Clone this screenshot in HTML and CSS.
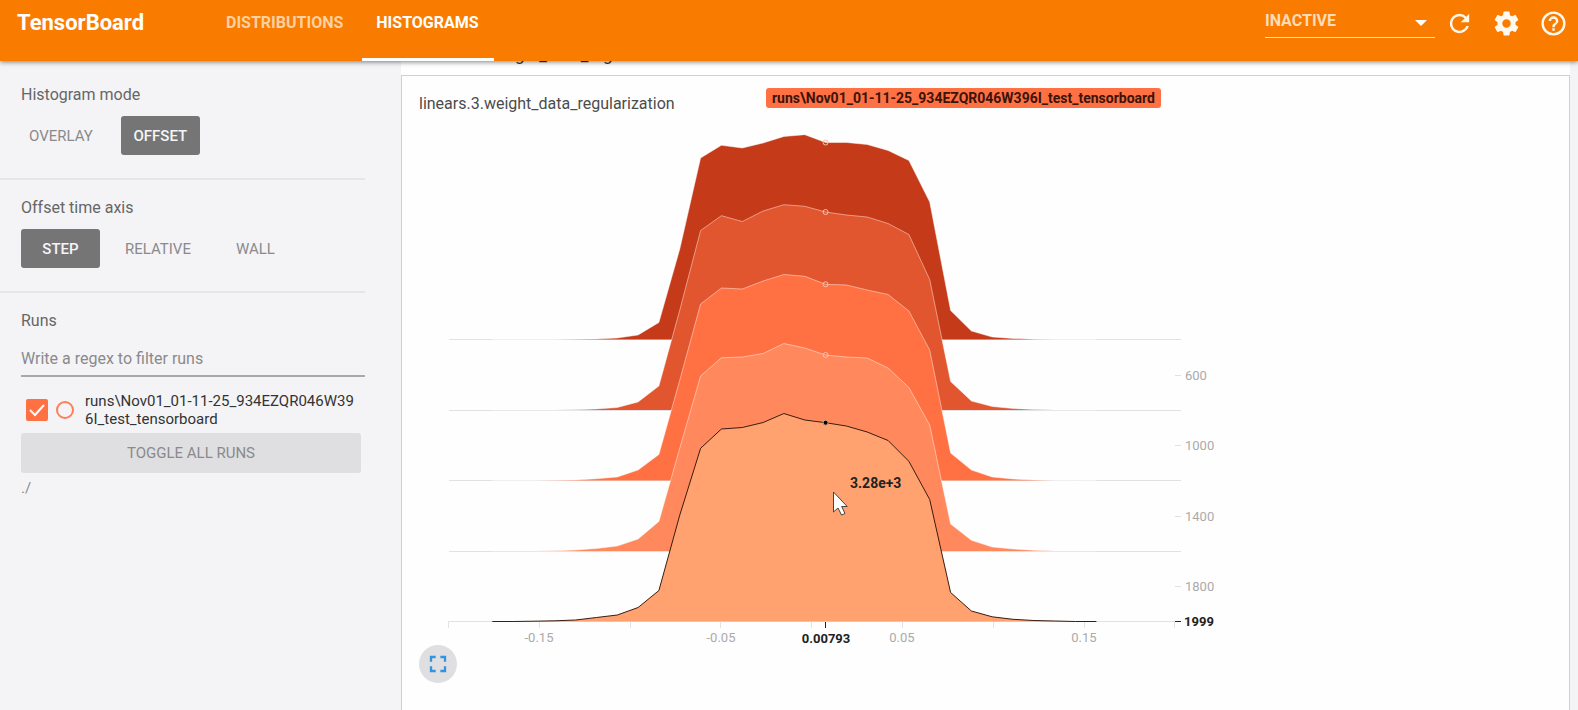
FILE: index.html
```html
<!DOCTYPE html>
<html lang="en">
<head>
<meta charset="utf-8">
<title>TensorBoard</title>
<link rel="stylesheet" href="styles.css">
</head>
<body>
<header class="toolbar">
  <h1 class="brand">TensorBoard</h1>
  <nav class="tabs">
    <a class="tab" href="#distributions">DISTRIBUTIONS</a>
    <a class="tab tab-active" href="#histograms" aria-current="page">HISTOGRAMS</a>
  </nav>
  <div class="reload">
    <select class="reload-select" aria-label="Inactive dashboards"><option>INACTIVE</option></select>
    <svg class="caret" viewBox="0 0 12 6" aria-hidden="true"><path d="M0 0h12L6 6z"/></svg>
  </div>
  <button class="icon-button" aria-label="Reload"><svg viewBox="0 0 24 24"><path d="M17.65 6.35A7.96 7.96 0 0 0 12 4a8 8 0 1 0 7.73 10h-2.08A6 6 0 1 1 12 6c1.66 0 3.14.69 4.22 1.78L13 11h7V4z"/></svg></button>
  <button class="icon-button" aria-label="Settings"><svg viewBox="0 0 24 24"><path d="M19.43 12.98c.04-.32.07-.64.07-.98s-.03-.66-.07-.98l2.11-1.65c.19-.15.24-.42.12-.64l-2-3.46c-.12-.22-.39-.3-.61-.22l-2.49 1c-.52-.4-1.08-.73-1.69-.98l-.38-2.65A.49.49 0 0 0 14 2h-4c-.25 0-.46.18-.49.42l-.38 2.65c-.61.25-1.17.59-1.69.98l-2.49-1c-.23-.09-.49 0-.61.22l-2 3.46c-.13.22-.07.49.12.64l2.11 1.65c-.04.32-.07.65-.07.98s.03.66.07.98l-2.11 1.65c-.19.15-.24.42-.12.64l2 3.46c.12.22.39.3.61.22l2.49-1c.52.4 1.08.73 1.69.98l.38 2.65c.03.24.24.42.49.42h4c.25 0 .46-.18.49-.42l.38-2.65c.61-.25 1.17-.59 1.69-.98l2.49 1c.23.09.49 0 .61-.22l2-3.46c.12-.22.07-.49-.12-.64zM12 15.5a3.5 3.5 0 1 1 0-7 3.5 3.5 0 0 1 0 7z"/></svg></button>
  <button class="icon-button" aria-label="Help"><svg viewBox="0 0 24 24"><path d="M11 18h2v-2h-2zm1-16a10 10 0 1 0 0 20 10 10 0 0 0 0-20zm0 18a8 8 0 1 1 0-16 8 8 0 0 1 0 16zm0-14a4 4 0 0 0-4 4h2a2 2 0 1 1 4 0c0 2-3 1.75-3 5h2c0-2.25 3-2.5 3-5a4 4 0 0 0-4-4z"/></svg></button>
</header>
<div class="dashboard">
  <aside class="sidebar">
    <section class="group">
      <h2 class="group-title">Histogram mode</h2>
      <div class="options">
        <button class="option option-first">OVERLAY</button>
        <button class="option option-on">OFFSET</button>
      </div>
    </section>
    <section class="group">
      <h2 class="group-title">Offset time axis</h2>
      <div class="options">
        <button class="option option-on">STEP</button>
        <button class="option">RELATIVE</button>
        <button class="option">WALL</button>
      </div>
    </section>
    <section class="group group-runs">
      <h2 class="group-title">Runs</h2>
      <input class="regex" type="text" placeholder="Write a regex to filter runs" aria-label="Write a regex to filter runs">
      <div class="run">
        <span class="check">
          <input class="check-box" type="checkbox" id="run-1" checked>
          <svg class="check-mark" viewBox="0 0 22 22" aria-hidden="true"><path d="M4 11l5 5 9-10"/></svg>
        </span>
        <span class="run-color"></span>
        <label class="run-name" for="run-1">runs\Nov01_01-11-25_934EZQR046W396I_test_tensorboard</label>
      </div>
      <button class="toggle-all">TOGGLE ALL RUNS</button>
      <p class="logdir">./</p>
    </section>
  </aside>
  <main class="content">
    <div class="category"><span>linears.3.weight_data_regularization</span></div>
    <article class="card">
      <div class="card-head">
        <h3 class="card-title">linears.3.weight_data_regularization</h3>
        <span class="chip">runs\Nov01_01-11-25_934EZQR046W396I_test_tensorboard</span>
      </div>
      <svg class="chart" viewBox="419 120 800 530" role="img" aria-label="Histogram by step">
        <g class="baselines">
          <path d="M449 339.5H1181M449 410.5H1181M449 480.5H1181M449 551.5H1181M449 621.5H1175"/>
          <path d="M448.5 621v7M539.5 621v7M630.5 621v7M720.5 621v7M811.5 621v7M902.5 621v7M993.5 621v7M1084.5 621v7M1174.5 621v7"/>
          <path d="M1175 375.5h6M1175 445.5h6M1175 516.5h6M1175 586.5h6"/>
        </g>
        <g class="layers" id="layers"></g>
        <path class="hover-tick" d="M825.5 622v6M1175 621.5h6"/>
        <g class="axis">
          <text x="539" y="642">-0.15</text><text x="721" y="642">-0.05</text><text x="902" y="642">0.05</text><text x="1084" y="642">0.15</text>
        </g>
        <g class="axis axis-y">
          <text x="1185" y="380">600</text><text x="1185" y="450">1000</text><text x="1185" y="521">1400</text><text x="1185" y="591">1800</text>
        </g>
        <text class="hover-label hover-middle" x="826" y="643">0.00793</text>
        <text class="hover-label" x="1184" y="626">1999</text>
        <text class="hover-label hover-value" x="850" y="488">3.28e+3</text>
        <path class="pointer" d="M833.5 492v20l4.500-4 3.500 7 3.500-1.500-3.300-7h5.500z"/>
      </svg>
      <button class="expand" aria-label="Expand chart"><svg viewBox="0 0 24 24"><path d="M5 5h5v2H7v3H5zm9 0h5v5h-2V7h-3zM5 14h2v3h3v2H5zm12 0h2v5h-5v-2h3z"/></svg></button>
    </article>
  </main>
</div>
<script src="chart.js"></script>
</body>
</html>
```
FILE: styles.css
```css
* { box-sizing: border-box; }
body {
  margin: 0;
  height: 100vh;
  display: flex;
  flex-direction: column;
  overflow: hidden;
  background: #f4f4f6;
  color: #666;
  font-family: Roboto, "Liberation Sans", sans-serif;
  font-size: 16px;
}
h1, h2, h3, p { margin: 0; font-weight: 400; }
button, input, select { font-family: inherit; border: 0; padding: 0; background: none; }

.toolbar {
  flex: none;
  height: 61px;
  display: flex;
  align-items: flex-start;
  padding: 0 10px 0 17px;
  background: #f97c00;
  color: #fff;
  box-shadow: 0 1px 5px rgba(0, 0, 0, .5);
  position: relative;
  z-index: 1;
}
.brand { width: 195px; font-size: 22px; line-height: 46px; font-weight: 700; }
.tabs { flex: 1; display: flex; height: 100%; gap: 4px; }
.tab {
  padding: 0 15px 0 14px;
  border-bottom: 3px solid transparent;
  color: #ffd0a0;
  font-size: 16px;
  line-height: 46px;
  font-weight: 700;
  text-decoration: none;
}
.tab-active { color: #fff; border-color: #fff; }
.reload { position: relative; width: 170px; margin-right: 10px; }
.reload-select {
  appearance: none;
  width: 100%;
  height: 38px;
  padding-top: 4px;
  border-bottom: 1px solid #ffe0c0;
  border-radius: 0;
  color: #ffdcb8;
  font-size: 16px;
  font-weight: 700;
}
.caret { position: absolute; right: 8px; top: 20px; width: 12px; fill: #fff; pointer-events: none; }
.icon-button { width: 29px; height: 46px; margin-right: 18px; display: grid; place-items: center; }
.icon-button:last-child { margin-right: 0; }
.icon-button svg { width: 29px; height: 29px; fill: #fff8ec; }

.dashboard { flex: 1; display: flex; min-height: 0; }
.sidebar { flex: none; width: 401px; padding-right: 36px; }
.group { padding: 23px 0 23px 21px; border-bottom: 2px solid #e6e6e8; }
.group + .group { padding-top: 17px; }
.group-runs { border: 0; }
.group-title { font-size: 16px; line-height: 22px; }
.options { display: flex; gap: 9px; margin-top: 10px; }
.option {
  min-width: 79px;
  height: 39px;
  padding: 0 16px;
  border-radius: 3px;
  color: #8a8a8c;
  font-size: 15px;
}
.option-first { padding: 0 8px; margin-right: 11px; }
.option-on { padding: 0 8px; background: #757575; color: #f5f5f7; font-weight: 500; }
.regex {
  display: block;
  width: 100%;
  height: 35px;
  margin-top: 10px;
  border-bottom: 2px solid #a8a8a8;
  color: #666;
  font-size: 16px;
}
.regex::placeholder { color: #8a8a8c; opacity: 1; }
.run { display: flex; align-items: center; gap: 8px; margin-top: 15px; padding: 0 5px; }
.check { display: grid; flex: none; }
.check-box { appearance: none; grid-area: 1 / 1; width: 22px; height: 22px; margin: 0; border-radius: 2px; background: #ff7043; }
.check-mark { grid-area: 1 / 1; width: 22px; fill: none; stroke: #fff; stroke-width: 2; pointer-events: none; }
.run-color { flex: none; width: 18px; height: 18px; border: 2px solid #ff7f58; border-radius: 50%; }
.run-name { margin-left: 3px; color: #333; font-size: 15px; line-height: 18px; word-break: break-all; }
.toggle-all {
  display: block;
  width: calc(100% - 4px);
  height: 40px;
  margin-top: 5px;
  border-radius: 3px;
  background: #dfdfe1;
  color: #8a8a8c;
  font-size: 15px;
}
.logdir { margin-top: 6px; color: #8a8a8c; font-size: 15px; line-height: 18px; }

.content { flex: 1; min-width: 0; display: flex; flex-direction: column; padding-right: 8px; }
.category {
  flex: none;
  display: flex;
  align-items: flex-end;
  height: 14px;
  padding: 0 0 10px 19px;
  overflow: hidden;
  background: #fff;
  color: #333;
  font-size: 17px;
  line-height: 20px;
}
.card {
  flex: 1;
  min-height: 0;
  padding: 11px 17px;
  border: 1px solid #d0d0d2;
  border-bottom: 0;
  background: #fefefe;
}
.card-head { display: flex; justify-content: space-between; align-items: flex-start; max-width: 742px; height: 33px; }
.card-title { padding-top: 6px; color: #4c4c4c; font-size: 16px; line-height: 22px; }
.chip {
  margin-top: 1px;
  padding: 0 6px;
  border-radius: 3px;
  background: #ff7043;
  color: #3c1409;
  font-size: 14px;
  line-height: 20px;
  font-weight: 700;
}
.chart { display: block; width: 800px; max-width: 100%; }
.baselines { stroke: #e2e2e4; fill: none; }
.layer-line { fill: none; stroke: #fff; stroke-opacity: .45; }
.layer-line-hover { stroke: #3a1c10; stroke-opacity: 1; }
.layer-dot { fill: none; stroke: #ffc0a6; }
.layer-dot-hover { fill: #000; stroke: #e0a080; }
.hover-tick { stroke: #222; }
.axis { fill: #aaa; font-size: 13px; text-anchor: middle; }
.axis-y { text-anchor: start; }
.hover-label { fill: #222; font-size: 13px; font-weight: 700; }
.hover-middle { text-anchor: middle; }
.hover-value { font-size: 14px; }
.pointer { fill: #fff; stroke: #444; }
.expand { display: grid; place-items: center; width: 38px; height: 38px; margin-top: -5px; border-radius: 50%; background: #dfdfe1; position: relative; }
.expand svg { width: 28px; fill: #3194e0; }
```
FILE: chart.js
```js
const X0 = 492.3, STEP = 20.83;
const layers = [
  { fill: '#c53a19', base: 339.5, y: [339.5, 339.5, 339.5, 339.5, 339.3, 339, 338, 335, 322.5, 249, 158, 145.3, 148, 143, 136.5, 134.7, 142.5, 142.5, 144.5, 150.5, 160.5, 202, 310.5, 331, 337, 338.5, 339.2, 339.5, 339.5, 339.5] },
  { fill: '#e1562e', base: 410, y: [410, 410, 410, 410, 409.8, 409, 407.5, 402, 386, 310, 230.5, 215.7, 221.5, 211, 204.7, 206.3, 212, 215, 217, 223.5, 234.5, 279.5, 381.5, 401, 406.5, 408.5, 409.5, 410, 410, 410] },
  { fill: '#ff7043', base: 480.5, y: [480.5, 480.5, 480.5, 480.3, 480, 478.8, 477, 470, 454.5, 380, 304, 288, 289, 281, 274.5, 276.3, 284.3, 285, 290, 294.5, 311, 350, 453, 470, 477, 479, 480, 480.5, 480.5, 480.5] },
  { fill: '#ff895d', base: 551, y: [551, 551, 551, 550.8, 550, 548.5, 546, 539, 521.5, 448, 376, 357.8, 357, 353.5, 343.5, 348, 355, 357, 358, 368, 387.5, 425, 524, 540.3, 547, 549, 550.3, 551, 551, 551] },
  { fill: '#ffa270', base: 621.5, hover: true, y: [621.5, 621.5, 621.2, 620.8, 620, 617.5, 615, 607.5, 590.5, 515, 448.3, 429, 427.5, 422.5, 413.5, 420, 422.7, 426, 432, 440.5, 461.3, 499.5, 592.5, 611, 616.8, 619.3, 620.5, 621, 621.5, 621.5] }
];
const root = document.getElementById('layers');
function add(name, attrs) {
  const node = document.createElementNS('http://www.w3.org/2000/svg', name);
  for (const key in attrs) node.setAttribute(key, attrs[key]);
  root.appendChild(node);
}
for (const layer of layers) {
  const line = layer.y.map((y, i) => `${(X0 + i * STEP).toFixed(1)} ${y}`).join('L');
  const right = (X0 + 29 * STEP).toFixed(1);
  add('path', { d: `M${line}L${right} ${layer.base}H${X0}Z`, fill: layer.fill });
  add('path', { d: `M${line}`, class: layer.hover ? 'layer-line layer-line-hover' : 'layer-line' });
  add('circle', { cx: X0 + 16 * STEP, cy: layer.y[16], r: 2.5, class: layer.hover ? 'layer-dot layer-dot-hover' : 'layer-dot' });
}
```
